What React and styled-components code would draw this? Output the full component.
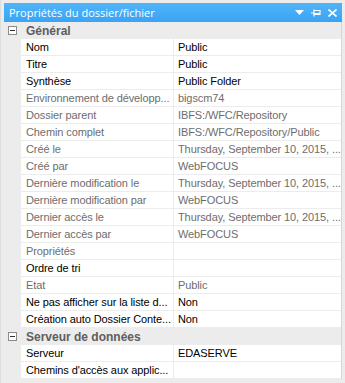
import React from 'react'
import styled, { createGlobalStyle } from 'styled-components'

const Global = createGlobalStyle`
    html, body {
        margin: 0;
        padding: 0;
        background: #f0f0f0;
    }
    body {
        font-family: "Liberation Sans", Arial, sans-serif;
        font-size: 11px;
    }
`

const Frame = styled.div`
    width: 345px;
    height: 383px;
    box-sizing: border-box;
    padding: 3px 3px 0 3px;
    background: #ececec;
    border-left: 1px solid #dcdcdc;
    overflow: hidden;
`

const TitleBar = styled.div`
    height: 19px;
    background: linear-gradient(#50b4f8, #3aa3f4);
    display: flex;
    align-items: center;
    justify-content: space-between;
    padding: 0 5px 0 5px;
    color: #ffffff;
    font-family: "Open Sans", "Liberation Sans", sans-serif;
    font-size: 11px;
`

const TitleText = styled.div`
    white-space: nowrap;
`

const TitleButtons = styled.div`
    display: flex;
    align-items: center;
    gap: 7px;
`

const Grid = styled.div`
    background: #ececec;
    border-right: 1px solid #d6d6d6;
`

const CategoryRow = styled.div`
    height: 17px;
    display: flex;
    align-items: center;
    background: #ececec;
`

const Toggle = styled.div`
    width: 17px;
    display: flex;
    justify-content: center;
    align-items: center;
`

const Box = styled.div`
    width: 7px;
    height: 7px;
    border: 1px solid #8a8a8a;
    background: #fff;
    position: relative;
    &::after {
        content: '';
        position: absolute;
        left: 1px;
        right: 1px;
        top: 3px;
        height: 1px;
        background: #333;
    }
`

const CategoryName = styled.div`
    font-weight: bold;
    color: #5e5e5e;
    padding-left: 5px;
    font-size: 12px;
`

const Row = styled.div`
    height: 17px;
    display: flex;
    padding-left: 17px;
`

const Cell = styled.div`
    box-sizing: border-box;
    height: 17px;
    line-height: 16px;
    background: #ffffff;
    border-bottom: 1px solid #ececec;
    white-space: nowrap;
    overflow: hidden;
    letter-spacing: -0.1px;
    color: ${p => (p.$ro ? '#6d6d6d' : '#000000')};
`

const NameCell = styled(Cell)`
    width: 153px;
    padding-left: 5px;
    border-right: 1px solid #ececec;
`

const ValueCell = styled(Cell)`
    flex: 1;
    padding-left: 4px;
`

const groups = [
    {
        name: 'Général',
        rows: [
            ['Nom', 'Public'],
            ['Titre', 'Public'],
            ['Synthèse', 'Public Folder'],
            ['Environnement de développ...', 'bigscm74', true],
            ['Dossier parent', 'IBFS:/WFC/Repository', true],
            ['Chemin complet', 'IBFS:/WFC/Repository/Public', true],
            ['Créé le', 'Thursday, September 10, 2015, ...', true],
            ['Créé par', 'WebFOCUS', true],
            ['Dernière modification le', 'Thursday, September 10, 2015, ...', true],
            ['Dernière modification par', 'WebFOCUS', true],
            ['Dernier accès le', 'Thursday, September 10, 2015, ...', true],
            ['Dernier accès par', 'WebFOCUS', true],
            ['Propriétés', '', true],
            ['Ordre de tri', ''],
            ['Etat', 'Public', true],
            ['Ne pas afficher sur la liste d...', 'Non'],
            ['Création auto Dossier Conte...', 'Non'],
        ],
    },
    {
        name: 'Serveur de données',
        rows: [
            ['Serveur', 'EDASERVE'],
            ["Chemins d'accès aux applic...", ''],
        ],
    },
]

const DownIcon = () => (
    <svg width="9" height="5" viewBox="0 0 9 5">
        <path d="M0 0H9L4.5 5Z" fill="#fff" />
    </svg>
)

const PinIcon = () => (
    <svg width="10" height="8" viewBox="0 0 10 8">
        <path d="M0 4H3M3 0.5V7.5M3 1.5H9V5.5H3M3 4.5H9" stroke="#fff" strokeWidth="1.2" fill="none" />
    </svg>
)

const CloseIcon = () => (
    <svg width="9" height="8" viewBox="0 0 9 8">
        <path d="M0.5 0.5L8.5 7.5M8.5 0.5L0.5 7.5" stroke="#fff" strokeWidth="1.6" />
    </svg>
)

export default () => (
    <Frame>
        <Global />
        <TitleBar>
            <TitleText>Propriétés du dossier/fichier</TitleText>
            <TitleButtons>
                <DownIcon />
                <PinIcon />
                <CloseIcon />
            </TitleButtons>
        </TitleBar>
        <Grid>
            {groups.map(g => (
                <React.Fragment key={g.name}>
                    <CategoryRow>
                        <Toggle><Box /></Toggle>
                        <CategoryName>{g.name}</CategoryName>
                    </CategoryRow>
                    {g.rows.map(([n, v, ro]) => (
                        <Row key={n}>
                            <NameCell $ro={ro}>{n}</NameCell>
                            <ValueCell $ro={ro}>{v}</ValueCell>
                        </Row>
                    ))}
                </React.Fragment>
            ))}
        </Grid>
    </Frame>
)
